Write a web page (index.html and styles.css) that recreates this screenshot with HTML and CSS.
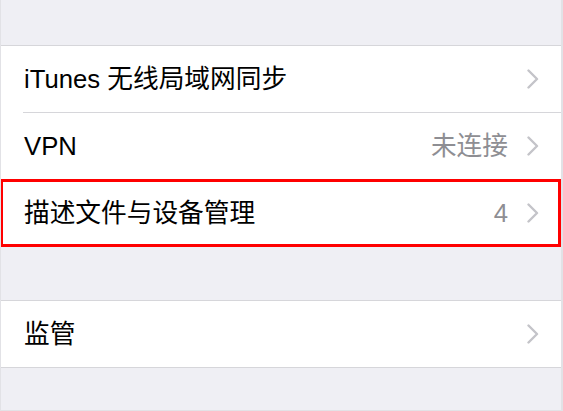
FILE: index.html
```html
<!DOCTYPE html>
<html lang="zh-CN">
<head>
<meta charset="utf-8">
<title>通用</title>
<link rel="stylesheet" href="styles.css">
</head>
<body>
<div class="screen">
  <div class="spacer spacer-top"></div>
  <div class="group">
    <div class="row">
      <div class="cell">
        <span class="label">iTunes 无线局域网同步</span>
        <span class="detail"></span>
        <svg class="chev" width="12" height="20" viewBox="0 0 12 20"><polyline points="1.5,1.5 10,10 1.5,18.5" fill="none" stroke="#c4c4c9" stroke-width="2.4" stroke-linecap="round" stroke-linejoin="round"/></svg>
      </div>
    </div>
    <div class="row">
      <div class="cell">
        <span class="label">VPN</span>
        <span class="detail">未连接</span>
        <svg class="chev" width="12" height="20" viewBox="0 0 12 20"><polyline points="1.5,1.5 10,10 1.5,18.5" fill="none" stroke="#c4c4c9" stroke-width="2.4" stroke-linecap="round" stroke-linejoin="round"/></svg>
      </div>
    </div>
    <div class="row row-highlight">
      <div class="cell">
        <span class="label">描述文件与设备管理</span>
        <span class="detail">4</span>
        <svg class="chev" width="12" height="20" viewBox="0 0 12 20"><polyline points="1.5,1.5 10,10 1.5,18.5" fill="none" stroke="#c4c4c9" stroke-width="2.4" stroke-linecap="round" stroke-linejoin="round"/></svg>
      </div>
    </div>
  </div>
  <div class="spacer spacer-mid"></div>
  <div class="group">
    <div class="row">
      <div class="cell">
        <span class="label">监管</span>
        <span class="detail"></span>
        <svg class="chev" width="12" height="20" viewBox="0 0 12 20"><polyline points="1.5,1.5 10,10 1.5,18.5" fill="none" stroke="#c4c4c9" stroke-width="2.4" stroke-linecap="round" stroke-linejoin="round"/></svg>
      </div>
    </div>
  </div>
  <div class="spacer spacer-bottom"></div>
</div>
</body>
</html>
```

FILE: styles.css
```css
html, body {
  margin: 0;
  padding: 0;
}

body {
  background: #efeff4;
  font-family: "Liberation Sans", "Noto Sans CJK SC", sans-serif;
  color: #000;
}

.screen {
  width: 563px;
  height: 411px;
  box-sizing: border-box;
  border-left: 1px solid #e2e2e6;
  border-right: 2px solid #e2e2e6;
  border-bottom: 1px solid #e2e2e6;
  background: #efeff4;
  display: flex;
  flex-direction: column;
  overflow: hidden;
}

.spacer-top {
  height: 45px;
}

.spacer-mid {
  height: 53px;
}

.spacer-bottom {
  flex: 1;
}

.group {
  background: #fff;
  border-top: 1px solid #d6d6da;
  border-bottom: 1px solid #d6d6da;
}

.row {
  padding-left: 22px;
  position: relative;
}

.cell {
  height: 66px;
  display: flex;
  align-items: center;
  padding-left: 1px;
  padding-right: 22px;
  border-bottom: 1px solid #d6d6da;
}

.row:last-child .cell {
  border-bottom: none;
  height: 66px;
}

.label {
  flex: 1;
  font-size: 25.7px;
  line-height: 30px;
  white-space: nowrap;
}

.detail {
  font-size: 25.7px;
  line-height: 30px;
  color: #8e8e93;
  margin-right: 19px;
}

.chev {
  display: block;
  flex: none;
}

.row-highlight::after {
  content: "";
  position: absolute;
  left: -1px;
  right: 0;
  top: -1px;
  bottom: -1px;
  border: 3px solid #ff0000;
  pointer-events: none;
}
```
